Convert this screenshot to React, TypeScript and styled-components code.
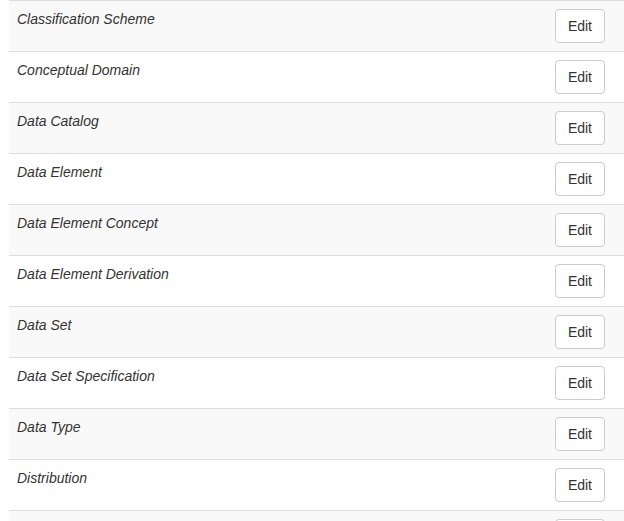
import styled, { createGlobalStyle } from 'styled-components';

const GlobalStyle = createGlobalStyle`
  body {
    margin: 0;
    font-family: "Liberation Sans", Arial, sans-serif;
    font-size: 14px;
    color: #333;
    overflow: hidden;
  }
`;

const items = [
  'Classification Scheme',
  'Conceptual Domain',
  'Data Catalog',
  'Data Element',
  'Data Element Concept',
  'Data Element Derivation',
  'Data Set',
  'Data Set Specification',
  'Data Type',
  'Distribution',
  'Document',
];

const App = () => {
  return (
    <>
      <GlobalStyle />
      <Wrapper>
        <Table>
          <tbody>
            {items.map((name) => (
              <Row key={name}>
                <NameCell>
                  <em>{name}</em>
                </NameCell>
                <ActionCell>
                  <EditButton type="button">Edit</EditButton>
                </ActionCell>
              </Row>
            ))}
          </tbody>
        </Table>
      </Wrapper>
    </>
  );
};

const Wrapper = styled.div`
  padding-left: 9px;
`;
const Table = styled.table`
  width: 100%;
  border-collapse: collapse;
  border-spacing: 0;
`;
const Row = styled.tr`
  &:nth-child(odd) {
    background: #f9f9f9;
  }
`;
const NameCell = styled.td`
  padding: 8px;
  line-height: 20px;
  vertical-align: top;
  border-top: 1px solid #ddd;
`;
const ActionCell = styled.td`
  padding: 8px 19px 8px 8px;
  line-height: 20px;
  vertical-align: top;
  text-align: right;
  border-top: 1px solid #ddd;
  width: 50px;
`;
const EditButton = styled.button`
  display: inline-block;
  height: 34px;
  padding: 6px 12px;
  font-family: "Liberation Sans", Arial, sans-serif;
  font-size: 14px;
  line-height: 20px;
  color: #333;
  background: #fff;
  border: 1px solid #ccc;
  border-radius: 4px;
  cursor: pointer;
`;

export default App;
